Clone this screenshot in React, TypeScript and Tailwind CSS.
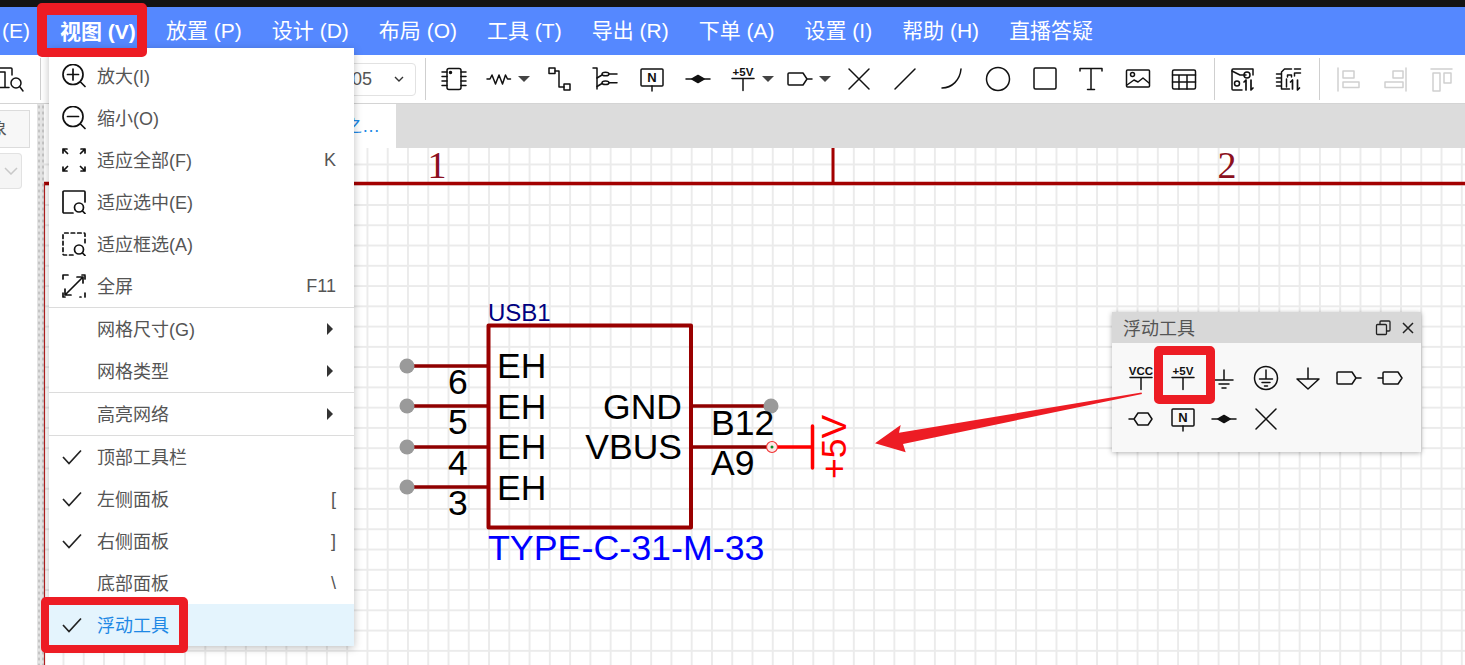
import type { ReactNode } from "react";

const FONT = "[font-family:'Liberation_Sans','Noto_Sans_CJK_SC',sans-serif]";

/* toolbar + float panel glyphs share a 32x32 box */
function G({ children, className = "text-[#111]" }: { children: ReactNode; className?: string }) {
  return (
    <svg viewBox="0 0 32 32" className={`h-8 w-8 shrink-0 ${className}`} fill="none" stroke="currentColor" strokeWidth={1.5} strokeLinecap="round" strokeLinejoin="round">
      {children}
    </svg>
  );
}

const Chip = () => (
  <G>
    <rect x="9" y="5.5" width="14" height="21" rx="2" />
    <path d="M4 9h5M4 13.500h5M4 18h5M4 22.500h5M23 9h5M23 13.500h5M23 18h5M23 22.500h5" />
    <circle cx="12.500" cy="9.500" r="1" fill="currentColor" />
  </G>
);
const Resistor = () => (
  <G>
    <path d="M4 16h3l2-4 3.500 9 3.500-9 3.500 9 3-9 2 4h3" />
  </G>
);
const Wire = () => (
  <G>
    <rect x="6" y="5" width="6" height="5.500" />
    <rect x="21" y="21" width="6" height="6" />
    <path d="M12 8h4v16h5" />
  </G>
);
const BusEntry = () => (
  <G>
    <path d="M4 5h4v21" />
    <path d="M8 15l5-3M8 23.500l5-3" />
    <ellipse cx="16.500" cy="11" rx="3.500" ry="1.800" />
    <ellipse cx="16.500" cy="19.700" rx="3.500" ry="1.800" />
    <path d="M20 11h8M20 19.700h8" />
  </G>
);
const NetN = () => (
  <G>
    <rect x="5" y="6" width="22" height="17" rx="1" />
    <path d="M16 23v5" />
    <text x="16" y="19" textAnchor="middle" fontSize="13" fontWeight="700" fill="currentColor" stroke="none">N</text>
  </G>
);
const Junction = () => (
  <G>
    <path d="M4 16h24" />
    <path d="M10 16l6-3.500 6 3.500-6 3.500z" fill="currentColor" />
  </G>
);
const Rail = ({ label }: { label: string }) => (
  <G>
    <text x="16" y="13" textAnchor="middle" fontSize="11.500" fontWeight="700" fill="currentColor" stroke="none">{label}</text>
    <path d="M5 15.500h22M16 15.500v12" />
  </G>
);
const Ground = () => (
  <G>
    <path d="M16 8v10M7 18h18M11 22h10M14 26h4" />
  </G>
);
const EarthCircle = () => (
  <G>
    <circle cx="16" cy="16" r="11.500" />
    <path d="M16 8v9M9.500 17h13M12 20.500h8M14.500 24h3" />
  </G>
);
const DownArrow = () => (
  <G>
    <path d="M16 6v11M5 17h22L16 27z" />
  </G>
);
const PortRight = () => (
  <G>
    <path d="M5 10h14l4 6-4 6H5a1 1 0 0 1-1-1V11a1 1 0 0 1 1-1zM23 16h5" />
  </G>
);
const PortLeft = () => (
  <G>
    <path d="M9 10h14l4 6-4 6H9a1 1 0 0 1-1-1V11a1 1 0 0 1 1-1zM3 16h5" />
  </G>
);
const PortBoth = () => (
  <G>
    <path d="M9 16l4-6h10l4 6-4 6H13zM4 16h5" />
  </G>
);
const Cross = () => (
  <G>
    <path d="M6 6l20 20M26 6L6 26" />
  </G>
);
const Line = () => (
  <G>
    <path d="M6 26L26 6" />
  </G>
);
const Arc = () => (
  <G>
    <path d="M6 25c10 0 18-8 19-19" />
  </G>
);
const Circle = () => (
  <G>
    <circle cx="16" cy="16" r="11.500" />
  </G>
);
const Square = () => (
  <G>
    <rect x="5" y="5" width="22" height="21" rx="1.500" />
  </G>
);
const TextT = () => (
  <G>
    <path d="M5 8V5.500h22V8M16 5.500v21M12.500 26.500h7" />
  </G>
);
const Picture = () => (
  <G>
    <rect x="4.500" y="7" width="23" height="17" rx="1" />
    <circle cx="10.500" cy="11.500" r="2" />
    <path d="M5 22l7-5 4 2 5-4 6 5" />
  </G>
);
const Table = () => (
  <G>
    <rect x="4.500" y="7" width="23" height="19" rx="1.500" />
    <path d="M4.500 12h23M4.500 19h23M11 12v14M19 12v14" />
  </G>
);
const SchSwap = () => (
  <G>
    <g transform="translate(-2 0)">
      <path d="M24 6h3v6M16 27H7a1 1 0 0 1-1-1V7a1 1 0 0 1 1-1h17" />
      <path d="M6 8l8 4h6" />
      <circle cx="21" cy="12" r="3" />
      <circle cx="11" cy="20.500" r="2.500" />
      <path d="M18 19l2-2v10M25 17v10l2-2" strokeWidth={1.700} />
    </g>
  </G>
);
const PcbSwap = () => (
  <G>
    <g transform="translate(-1.500 0)">
      <path d="M4 11h5M4 15h5M4 19h5M4 23h5M22 6h6M23 10h5M12 6h7M9 26V9l3-3M17 26H9M22 13v-3" />
      <path d="M15 14v-2h4v2M14 16v8" />
      <path d="M18 19l2-2v9M25 17v10l2-2" strokeWidth={1.700} />
    </g>
  </G>
);
const AlignLeft = () => (
  <G className="text-[#d0d0d0]">
    <path d="M3 5v23" />
    <rect x="8" y="8" width="11" height="7" />
    <rect x="8" y="19" width="16" height="5.500" />
  </G>
);
const AlignRight = () => (
  <G className="text-[#d0d0d0]">
    <path d="M25 5v23" />
    <rect x="12" y="8" width="10" height="7" />
    <rect x="4" y="19" width="18" height="5.500" />
  </G>
);
const AlignTop = () => (
  <G className="text-[#d0d0d0]">
    <path d="M3 6h21" />
    <rect x="5" y="10" width="7" height="18" />
    <rect x="16" y="10" width="7" height="10" />
  </G>
);
const FitSel = () => (
  <G>
    <path d="M3 5h11a1 1 0 0 1 1 1v6" />
    <path d="M3 9h5v15M3 24.500h9" />
    <circle cx="19" cy="20" r="5" />
    <path d="M23 24l3 4" />
  </G>
);

const Caret = () => <span className="ml-[3px] h-0 w-0 border-x-[6px] border-t-[6px] border-x-transparent border-t-[#444]" />;

function Tool({ w = "w-[46.5px]", children }: { w?: string; children: ReactNode }) {
  return <div className={`flex h-full shrink-0 items-center justify-center ${w}`}>{children}</div>;
}

const Sep = () => <div className="h-[42px] w-px shrink-0 bg-[#cfcfcf]" />;

/* menu glyphs, 24px */
function M({ children }: { children: ReactNode }) {
  return (
    <svg viewBox="0 0 24 24" className="h-6 w-6 text-[#111]" fill="none" stroke="currentColor" strokeWidth={1.7} strokeLinecap="round" strokeLinejoin="round">
      {children}
    </svg>
  );
}

const ZoomPlus = () => (
  <M>
    <circle cx="11" cy="10.500" r="10" />
    <path d="M5.500 10.500h11M11 5v11M18.500 18l4.500 4.500" />
  </M>
);
const ZoomMinus = () => (
  <M>
    <circle cx="11" cy="10.500" r="10" />
    <path d="M5.500 10.500h11M18.500 18l4.500 4.500" />
  </M>
);
const FitAll = () => (
  <M>
    <path d="M1 5V1h4M1 1l4.500 4.500M23 5V1h-4M23 1l-4.500 4.500M1 19v4h4M1 23l4.500-4.500M23 19v4h-4M23 23l-4.500-4.500" />
  </M>
);
const FitBox = () => (
  <M>
    <path d="M11 23H2a1 1 0 0 1-1-1V2a1 1 0 0 1 1-1h20a1 1 0 0 1 1 1v10" />
    <circle cx="17" cy="17.500" r="4.500" />
    <path d="M20.500 21l2.500 2.500" />
  </M>
);
const FitDash = () => (
  <M>
    <path d="M11 23H2a1 1 0 0 1-1-1V2a1 1 0 0 1 1-1h20a1 1 0 0 1 1 1v10" strokeDasharray="3.500 3" />
    <circle cx="17" cy="17.500" r="4.500" />
    <path d="M20.500 21l2.500 2.500" />
  </M>
);
const FullScr = () => (
  <M>
    <path d="M6 1H1v4M23 19v4M18 23h1M3 21L21 3M21 3h-6M21 3v6M3 21h6M3 21v-6M23 2v3M20 1h3M1 19v4h2" />
  </M>
);
const Tick = () => (
  <svg viewBox="0 0 20 16" className="h-4 w-5 text-[#222]" fill="none" stroke="currentColor" strokeWidth={1.7}>
    <path d="M1 8l6 6.500L19 1.500" />
  </svg>
);

function Item({ icon, label, key2, sub, active }: { icon?: ReactNode; label: string; key2?: string; sub?: boolean; active?: boolean }) {
  return (
    <div className={`flex h-[42px] items-center pr-[18px] ${active ? "bg-[#e4f4fd]" : ""}`}>
      <div className="ml-[13px] flex w-[35px] items-center">{icon}</div>
      <span className={`flex-1 pt-[2px] text-[18px] ${active ? "text-[#1e88e5]" : "text-[#555]"}`}>{label}</span>
      {key2 && <span className="text-[18px] text-[#555]">{key2}</span>}
      {sub && <span className="mr-[3px] h-0 w-0 border-y-[6px] border-l-[6px] border-y-transparent border-l-[#333]" />}
    </div>
  );
}

const Divider = () => <div className="h-px bg-[#dcdcdc]" />;

const menus = ["放置 (P)", "设计 (D)", "布局 (O)", "工具 (T)", "导出 (R)", "下单 (A)", "设置 (I)", "帮助 (H)", "直播答疑"];

function Schematic() {
  const left = [366, 406, 447, 487];
  const sans = "'Liberation Sans', sans-serif";
  return (
    <svg viewBox="44 148 1421 517" className="absolute inset-0 h-full w-full overflow-visible" fontFamily={sans}>
      {/* sheet frame */}
      <path d="M44 183.500H1465" stroke="#a30000" strokeWidth={3.500} />
      <path d="M44.500 183V665" stroke="#b02020" strokeWidth={1.200} />
      <path d="M833 148v35" stroke="#a30000" strokeWidth={3} />
      <text x="437" y="178" textAnchor="middle" fontFamily="'Liberation Serif', serif" fontSize="38" fill="#8b1020">1</text>
      <text x="1227" y="178" textAnchor="middle" fontFamily="'Liberation Serif', serif" fontSize="38" fill="#8b1020">2</text>

      {left.map((y) => (
        <g key={y}>
          <path d={`M407 ${y}H488`} stroke="#8f0000" strokeWidth={3.500} />
          <circle cx="407" cy={y} r="7.500" fill="#9a9a9a" />
        </g>
      ))}
      <path d="M691 406H771" stroke="#8f0000" strokeWidth={3.500} />
      <circle cx="771" cy="406" r="7.500" fill="#9a9a9a" />
      <path d="M691 447H771" stroke="#8f0000" strokeWidth={3.500} />
      <rect x="488.500" y="325.500" width="202.500" height="202" fill="none" stroke="#990000" strokeWidth={4} strokeLinejoin="round" />
      <path d="M772 447h40" stroke="#ff0000" strokeWidth={3.500} />
      <path d="M812.500 426v42" stroke="#ff0000" strokeWidth={3.500} strokeLinecap="round" />
      <circle cx="772" cy="447" r="5.500" fill="#fde8e8" stroke="#f03030" strokeWidth={1.200} />
      <circle cx="772" cy="447" r="1.500" fill="#0a8a2a" />

      <text x="488" y="321" fontSize="24" fill="#000080">USB1</text>
      {[378, 419, 459, 500].map((y) => (
        <text key={y} x="497" y={y} fontSize="35.500" fill="#000">EH</text>
      ))}
      {[["6", 394], ["5", 434], ["4", 475], ["3", 515]].map(([t, y]) => (
        <text key={t} x="448" y={y} fontSize="35.500" fill="#000">{t}</text>
      ))}
      <text x="682" y="419" textAnchor="end" fontSize="35.500" fill="#000">GND</text>
      <text x="682" y="459" textAnchor="end" fontSize="35.500" fill="#000">VBUS</text>
      <text x="711" y="435" fontSize="35.500" fill="#000">B12</text>
      <text x="711" y="475" fontSize="35.500" fill="#000">A9</text>
      <text x="488" y="560" fontSize="35.800" fill="#0000ff">TYPE-C-31-M-33</text>
      <text x="0" y="0" fontSize="35.500" fill="#ff0000" transform="translate(846 479) rotate(-90)">+5V</text>
    </svg>
  );
}

export default function App() {
  return (
    <div className={`relative flex h-[665px] w-[1465px] flex-col overflow-hidden bg-white ${FONT}`}>
      <div className="h-[7px] shrink-0 bg-[#141414]" />

      {/* menu bar */}
      <div className="flex h-[48px] shrink-0 items-center bg-[#5588ff] text-[21px] text-white">
        <span className="ml-[2px] w-[46px]">(E)</span>
        <span className="mt-[3px] flex h-[33px] w-[90px] items-center pb-[2px] pl-[12px] font-bold">视图 (V)</span>
        <div className="ml-[28px] flex gap-[30px]">
          {menus.map((m) => (
            <span key={m}>{m}</span>
          ))}
        </div>
      </div>

      {/* tool bar */}
      <div className="flex h-[49px] shrink-0 items-center border-b border-[#d4d4d4] bg-white">
        <div className="flex w-[40px] shrink-0 -translate-x-[3px] items-center">
          <FitSel />
        </div>
        <Sep />
        <div className="flex w-[375px] shrink-0 justify-end">
          <div className="flex h-[33px] w-[110px] items-center justify-end rounded border border-[#e2e2e2] pr-[10px] text-[18px] text-[#555]">
            <span className="mr-[21px]">05</span>
            <svg viewBox="0 0 12 8" className="h-2 w-3 text-[#333]" fill="none" stroke="currentColor" strokeWidth={1.400}>
              <path d="M2 2l4 4 4-4" />
            </svg>
          </div>
        </div>
        <div className="ml-[9px]">
          <Sep />
        </div>
        <div className="ml-[5px] flex h-full items-center">
          <Tool><Chip /></Tool>
          <Tool w="w-[58px]"><Resistor /><Caret /></Tool>
          <Tool><Wire /></Tool>
          <Tool><BusEntry /></Tool>
          <Tool><NetN /></Tool>
          <Tool><Junction /></Tool>
          <Tool w="w-[58px]"><Rail label="+5V" /><Caret /></Tool>
          <Tool w="w-[56px]"><PortRight /><Caret /></Tool>
          <Tool><Cross /></Tool>
          <Tool><Line /></Tool>
          <Tool><Arc /></Tool>
          <Tool><Circle /></Tool>
          <Tool><Square /></Tool>
          <Tool><TextT /></Tool>
          <Tool><Picture /></Tool>
          <Tool><Table /></Tool>
          <div className="ml-[6px]"><Sep /></div>
          <div className="ml-[6px] flex h-full items-center">
            <Tool><SchSwap /></Tool>
            <Tool><PcbSwap /></Tool>
          </div>
          <div className="ml-[5px]"><Sep /></div>
          <div className="ml-[8px] flex h-full items-center">
            <Tool><AlignLeft /></Tool>
            <Tool><AlignRight /></Tool>
            <Tool><AlignTop /></Tool>
          </div>
        </div>
      </div>

      {/* body */}
      <div className="flex min-h-0 flex-1">
        <div className="w-[37px] shrink-0 overflow-hidden bg-white pt-[6px]">
          <div className="h-[38px] w-[30px] overflow-hidden border border-l-0 border-[#dcdcdc] bg-[#f7f7f7]">
            <span className="-ml-[11px] block text-[18px] leading-[36px] text-[#555]">象</span>
          </div>
          <div className="mt-[5px] flex h-[36px] w-[22px] items-center justify-end rounded-r border border-l-0 border-[#e2e2e2] bg-[#f5f5f5] pr-[3px]">
            <svg viewBox="0 0 14 8" className="h-2 w-[14px] text-[#c8c8c8]" fill="none" stroke="currentColor" strokeWidth={1.500}>
              <path d="M1 1l6 6 6-6" />
            </svg>
          </div>
        </div>
        <div className="w-[7px] shrink-0 bg-[#e4e4e4] bg-[radial-gradient(#c4c4c4_1px,transparent_1.2px)] bg-[size:4px_6px]" />
        <div className="flex min-w-0 flex-1 flex-col">
          <div className="h-[44px] shrink-0 bg-[#dcdcdc]">
            <div className="flex h-full w-[352px] items-center justify-end bg-white pr-[16px] text-[18px] text-[#1e88e5]">之…</div>
          </div>
          <div className="relative min-h-0 flex-1 bg-white bg-[linear-gradient(to_right,#ebebeb_2px,transparent_2px),linear-gradient(to_bottom,#ebebeb_2px,transparent_2px)] bg-[size:20.27px_20.27px] bg-[position:18.5px_15.5px]">
            <Schematic />
          </div>
        </div>
      </div>

      {/* view menu */}
      <div className="absolute left-[49px] top-[48px] w-[305px] bg-white pt-[7px] shadow-[0_2px_8px_rgba(0,0,0,0.25)]">
        <Item icon={<ZoomPlus />} label="放大(I)" />
        <Item icon={<ZoomMinus />} label="缩小(O)" />
        <Item icon={<FitAll />} label="适应全部(F)" key2="K" />
        <Item icon={<FitBox />} label="适应选中(E)" />
        <Item icon={<FitDash />} label="适应框选(A)" />
        <Item icon={<FullScr />} label="全屏" key2="F11" />
        <Divider />
        <Item label="网格尺寸(G)" sub />
        <Item label="网格类型" sub />
        <Divider />
        <Item label="高亮网络" sub />
        <Divider />
        <Item icon={<Tick />} label="顶部工具栏" />
        <Item icon={<Tick />} label="左侧面板" key2="[" />
        <Item icon={<Tick />} label="右侧面板" key2="]" />
        <Item label="底部面板" key2="\" />
        <Item icon={<Tick />} label="浮动工具" active />
      </div>

      {/* floating tools */}
      <div className="absolute left-[1112px] top-[312px] h-[140px] w-[309px] bg-[#f8f8f8] shadow-[0_1px_5px_rgba(0,0,0,0.3)]">
        <div className="flex h-[31px] items-center bg-[#d8d8d8] pl-[11px] pr-[5px] text-[18px] text-[#555]">
          <span className="flex-1 pt-[3px]">浮动工具</span>
          <svg viewBox="0 0 16 16" className="mr-[9px] h-4 w-4 text-[#222]" fill="none" stroke="currentColor" strokeWidth={1.300}>
            <rect x="1.500" y="4.500" width="10" height="10" rx="1" />
            <path d="M5 4.500V2a1 1 0 0 1 1-1h8a1 1 0 0 1 1 1v8a1 1 0 0 1-1 1h-2.500" />
          </svg>
          <svg viewBox="0 0 16 16" className="h-4 w-4 text-[#222]" fill="none" stroke="currentColor" strokeWidth={1.500}>
            <path d="M3 3l10 10M13 3L3 13" />
          </svg>
        </div>
        <div className="ml-[8px] mt-[14px] grid grid-cols-[repeat(7,41.7px)] auto-rows-[41px] place-items-center">
          <Rail label="VCC" />
          <Rail label="+5V" />
          <Ground />
          <EarthCircle />
          <DownArrow />
          <PortRight />
          <PortLeft />
          <PortBoth />
          <NetN />
          <Junction />
          <Cross />
        </div>
      </div>

      {/* annotations */}
      <div className="absolute left-[37px] top-[3px] h-[54px] w-[110px] rounded-[5px] border-x-[10px] border-t-[12px] border-b-[9px] border-[#ed1c24]" />
      <div className="absolute left-[41px] top-[597px] h-[56px] w-[147px] rounded-[5px] border-x-[8px] border-y-[8px] border-r-[9px] border-[#ed1c24]" />
      <div className="absolute left-[1154px] top-[346px] h-[58px] w-[61px] rounded-[5px] border-[9px] border-[#ed1c24]" />
      <svg viewBox="0 0 1465 665" className="pointer-events-none absolute inset-0 h-full w-full">
        <path d="M1141.500 392.500L1142 394L903 444L905.700 452.300L875 443.300L900.700 425L899 432.700Z" fill="#ed1c24" />
      </svg>
    </div>
  );
}
